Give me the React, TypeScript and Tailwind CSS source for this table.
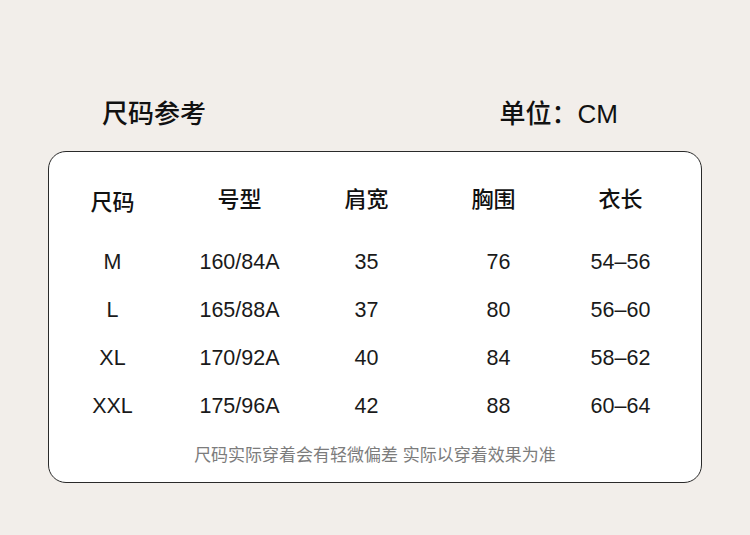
const headers = ['尺码', '号型', '肩宽', '胸围', '衣长'];

const rows = [
  ['M', '160/84A', '35', '76', '54–56'],
  ['L', '165/88A', '37', '80', '56–60'],
  ['XL', '170/92A', '40', '84', '58–62'],
  ['XXL', '175/96A', '42', '88', '60–64'],
];

export default function App() {
  return (
    <div className="w-[750px] h-[535px] bg-[#f2eeea] pt-[88px] font-['Liberation_Sans','Noto_Sans_CJK_SC',sans-serif] text-[#111]">
      <div className="h-[52px] flex items-center justify-between pl-[102px] pr-[132px]">
        <div className="text-[26px] leading-none font-medium">尺码参考</div>
        <div className="text-[26px] leading-none font-medium">单位：CM</div>
      </div>

      <div className="mt-[11px] ml-[48px] w-[654px] h-[332px] bg-white border border-[#2a2a2a] rounded-[18px] pt-[24px]">
        <div className="grid grid-cols-[repeat(5,127px)] h-[48px] items-center text-[22px] leading-none font-medium">
          {headers.map((h, i) => (
            <div key={h} className={i === 0 ? 'text-center pt-[5px]' : 'text-center'}>
              {h}
            </div>
          ))}
        </div>

        <div className="mt-[15px]">
          {rows.map((r) => (
            <div key={r[0]} className="grid grid-cols-[repeat(5,127px)] h-[48px] items-center text-[21.5px] leading-none text-[#1a1a1a]">
              {r.map((c, i) => (
                <div key={i} className={i === 3 ? 'text-center pl-[10px]' : 'text-center'}>
                  {c}
                </div>
              ))}
            </div>
          ))}
        </div>

        <div className="h-[28px] mt-[10px] flex items-center justify-center text-[17px] leading-none text-[#7c7c7c]">
          尺码实际穿着会有轻微偏差 实际以穿着效果为准
        </div>
      </div>
    </div>
  );
}
